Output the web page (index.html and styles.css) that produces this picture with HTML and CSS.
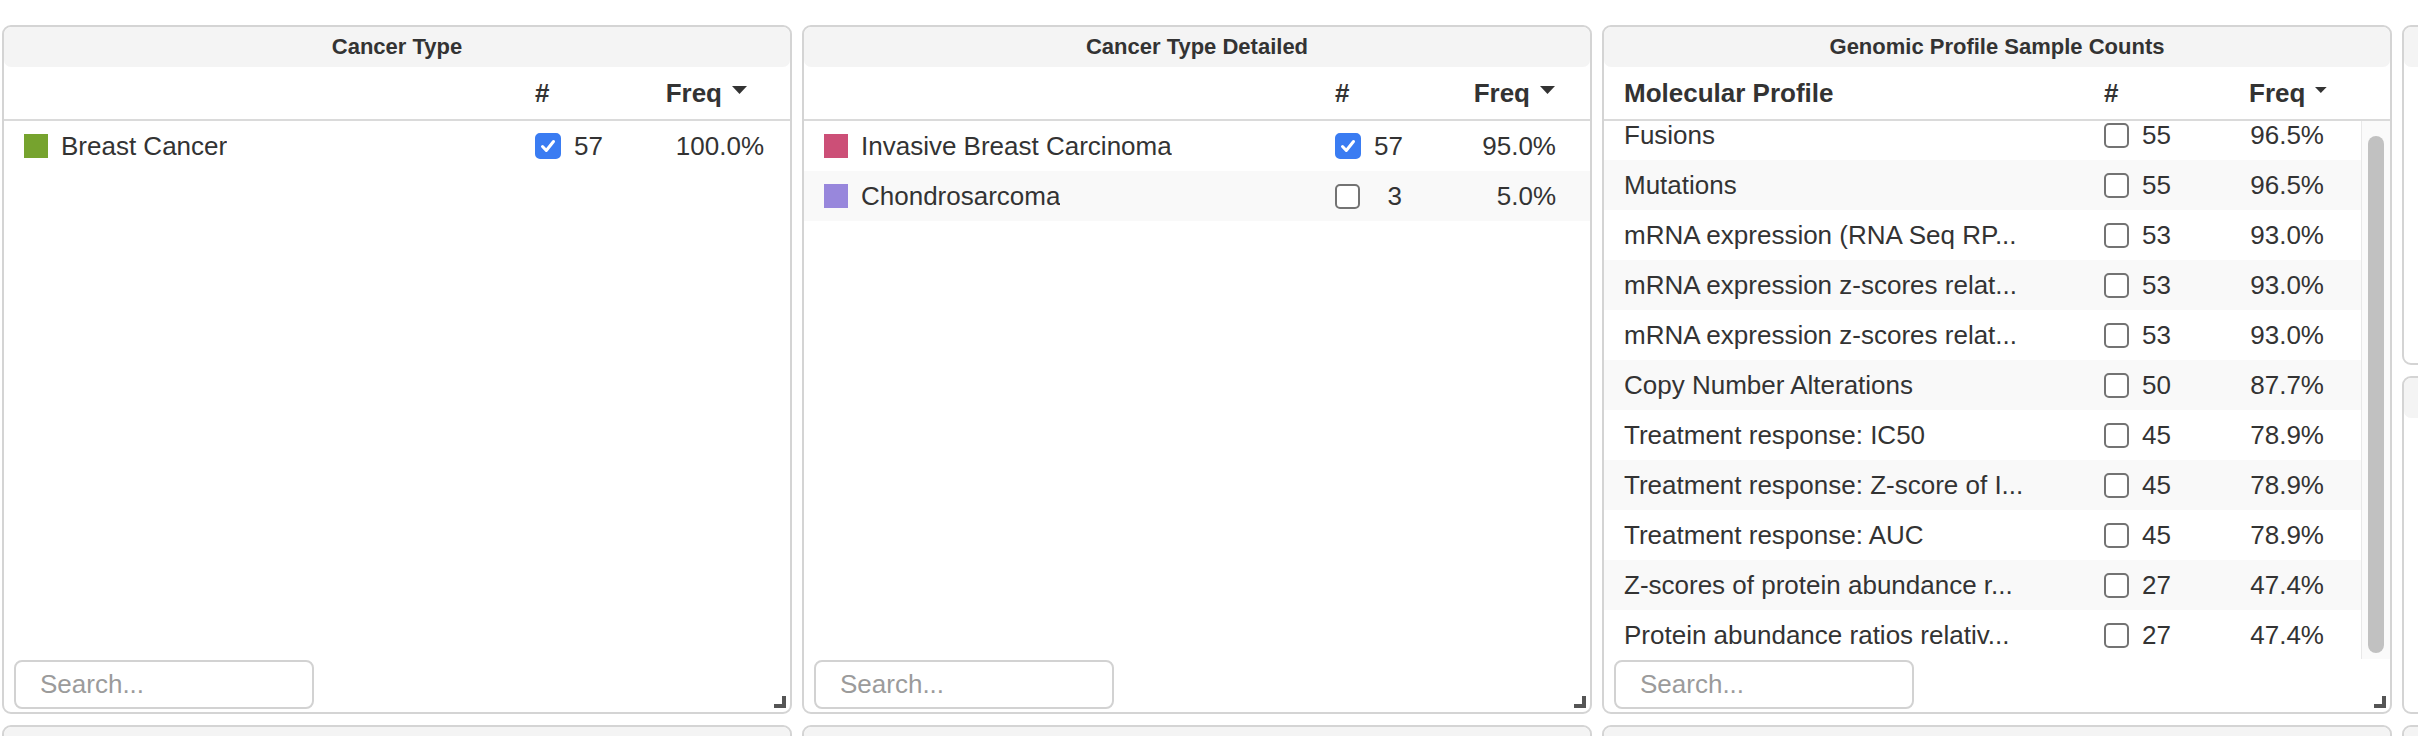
FILE: index.html
```html
<!DOCTYPE html>
<html lang="en">
<head>
<meta charset="utf-8">
<title>Study summary</title>
<link rel="stylesheet" href="styles.css">
</head>
<body>
<div class="grid">

  <section class="card card--tall card--type">
    <div class="card-title">Cancer Type</div>
    <div class="thead">
      <div class="th th-name"></div>
      <div class="th th-count">#</div>
      <div class="th th-freq">Freq <svg class="sort" width="15" height="8" viewBox="0 0 15 8"><path d="M0 0h15L7.5 8z"/></svg></div>
    </div>
    <div class="tbody">
      <div class="list">
        <div class="row">
          <div class="cell-name"><span class="swatch swatch--breast"></span><span class="name">Breast Cancer</span></div>
          <div class="cell-count"><span class="cb cb--on"><svg width="18" height="18" viewBox="0 0 18 18"><path d="M3.5 9.5l3.8 4L14.5 4.5"/></svg></span><span class="num">57</span></div>
          <div class="cell-freq">100.0%</div>
        </div>
      </div>
    </div>
    <div class="card-foot"><input class="search" type="text" placeholder="Search..."></div>
    <svg class="resize" width="12" height="12" viewBox="0 0 12 12"><path d="M8 0h4v12H0V8h8z"/></svg>
  </section>

  <section class="card card--tall card--detailed">
    <div class="card-title">Cancer Type Detailed</div>
    <div class="thead">
      <div class="th th-name"></div>
      <div class="th th-count">#</div>
      <div class="th th-freq">Freq <svg class="sort" width="15" height="8" viewBox="0 0 15 8"><path d="M0 0h15L7.5 8z"/></svg></div>
    </div>
    <div class="tbody">
      <div class="list">
        <div class="row">
          <div class="cell-name"><span class="swatch swatch--ibc"></span><span class="name">Invasive Breast Carcinoma</span></div>
          <div class="cell-count"><span class="cb cb--on"><svg width="18" height="18" viewBox="0 0 18 18"><path d="M3.5 9.5l3.8 4L14.5 4.5"/></svg></span><span class="num">57</span></div>
          <div class="cell-freq">95.0%</div>
        </div>
        <div class="row">
          <div class="cell-name"><span class="swatch swatch--chondro"></span><span class="name">Chondrosarcoma</span></div>
          <div class="cell-count"><span class="cb"></span><span class="num">3</span></div>
          <div class="cell-freq">5.0%</div>
        </div>
      </div>
    </div>
    <div class="card-foot"><input class="search" type="text" placeholder="Search..."></div>
    <svg class="resize" width="12" height="12" viewBox="0 0 12 12"><path d="M8 0h4v12H0V8h8z"/></svg>
  </section>

  <section class="card card--tall card--profile">
    <div class="card-title">Genomic Profile Sample Counts</div>
    <div class="thead">
      <div class="th th-name">Molecular Profile</div>
      <div class="th th-count">#</div>
      <div class="th th-freq">Freq <svg class="sort" width="15" height="8" viewBox="0 0 15 8"><path d="M0 0h15L7.5 8z"/></svg></div>
    </div>
    <div class="tbody">
      <div class="list list--scrolled">
        <div class="row"><div class="cell-name"><span class="name">Fusions</span></div><div class="cell-count"><span class="cb"></span><span class="num">55</span></div><div class="cell-freq">96.5%</div></div>
        <div class="row"><div class="cell-name"><span class="name">Mutations</span></div><div class="cell-count"><span class="cb"></span><span class="num">55</span></div><div class="cell-freq">96.5%</div></div>
        <div class="row"><div class="cell-name"><span class="name">mRNA expression (RNA Seq RP...</span></div><div class="cell-count"><span class="cb"></span><span class="num">53</span></div><div class="cell-freq">93.0%</div></div>
        <div class="row"><div class="cell-name"><span class="name">mRNA expression z-scores relat...</span></div><div class="cell-count"><span class="cb"></span><span class="num">53</span></div><div class="cell-freq">93.0%</div></div>
        <div class="row"><div class="cell-name"><span class="name">mRNA expression z-scores relat...</span></div><div class="cell-count"><span class="cb"></span><span class="num">53</span></div><div class="cell-freq">93.0%</div></div>
        <div class="row"><div class="cell-name"><span class="name">Copy Number Alterations</span></div><div class="cell-count"><span class="cb"></span><span class="num">50</span></div><div class="cell-freq">87.7%</div></div>
        <div class="row"><div class="cell-name"><span class="name">Treatment response: IC50</span></div><div class="cell-count"><span class="cb"></span><span class="num">45</span></div><div class="cell-freq">78.9%</div></div>
        <div class="row"><div class="cell-name"><span class="name">Treatment response: Z-score of I...</span></div><div class="cell-count"><span class="cb"></span><span class="num">45</span></div><div class="cell-freq">78.9%</div></div>
        <div class="row"><div class="cell-name"><span class="name">Treatment response: AUC</span></div><div class="cell-count"><span class="cb"></span><span class="num">45</span></div><div class="cell-freq">78.9%</div></div>
        <div class="row"><div class="cell-name"><span class="name">Z-scores of protein abundance r...</span></div><div class="cell-count"><span class="cb"></span><span class="num">27</span></div><div class="cell-freq">47.4%</div></div>
        <div class="row"><div class="cell-name"><span class="name">Protein abundance ratios relativ...</span></div><div class="cell-count"><span class="cb"></span><span class="num">27</span></div><div class="cell-freq">47.4%</div></div>
      </div>
      <div class="scrolltrack"><div class="thumb"></div></div>
    </div>
    <div class="card-foot"><input class="search" type="text" placeholder="Search..."></div>
    <svg class="resize" width="12" height="12" viewBox="0 0 12 12"><path d="M8 0h4v12H0V8h8z"/></svg>
  </section>

  <section class="card card--half card--col4a"><div class="card-title"></div></section>
  <section class="card card--half card--col4b"><div class="card-title"></div></section>

  <section class="card card--next"><div class="card-title"></div></section>
  <section class="card card--next"><div class="card-title"></div></section>
  <section class="card card--next"><div class="card-title"></div></section>
  <section class="card card--next"><div class="card-title"></div></section>

</div>
</body>
</html>
```

FILE: styles.css
```css
* {
  box-sizing: border-box;
}

html,
body {
  margin: 0;
  height: 100%;
  overflow: hidden;
  background: #ffffff;
}

body {
  font-family: "Liberation Sans", Arial, Helvetica, sans-serif;
  font-size: 26px;
  color: #333333;
}

.grid {
  display: grid;
  grid-template-columns: repeat(4, 790px);
  grid-template-rows: 340px 338px 300px;
  column-gap: 10px;
  row-gap: 11px;
  padding: 25px 0 0 2px;
  width: max-content;
}

.card {
  position: relative;
  display: flex;
  flex-direction: column;
  border: 2px solid #d4d4d4;
  border-radius: 9px;
  background: #ffffff;
  overflow: hidden;
}

.card--tall {
  grid-row: span 2;
}

.card--col4a {
  grid-column: 4;
  grid-row: 1;
}

.card--col4b {
  grid-column: 4;
  grid-row: 2;
}

.card--next {
  grid-row: 3;
}

.card-title {
  flex: 0 0 40px;
  display: flex;
  align-items: center;
  justify-content: center;
  background: #f4f4f4;
  border-radius: 7px;
  font-size: 22px;
  font-weight: bold;
  color: #333333;
}

/* column settings per card */
.card--type,
.card--detailed {
  --cw: 110px;
  --fw: 145px;
  --fp: 26px;
  --hp: 43px;
  --tp: 0px;
}

.card--detailed {
  --fp: 34px;
  --hp: 35px;
}

.card--profile {
  --cw: 145px;
  --fw: 112px;
  --fp: 37px;
  --hp: 34px;
  --tp: 29px;
}

.thead {
  flex: 0 0 54px;
  display: grid;
  grid-template-columns: 1fr var(--cw) var(--fw);
  align-items: center;
  padding-right: var(--tp);
  border-bottom: 2px solid #dadada;
  font-weight: bold;
}

.th-name {
  padding-left: 20px;
  white-space: nowrap;
}

.th-freq {
  display: flex;
  align-items: center;
  justify-content: flex-end;
  gap: 10px;
  padding-right: var(--hp);
}

.sort {
  fill: #333333;
  margin-bottom: 6px;
}

.tbody {
  flex: 1 1 auto;
  min-height: 0;
  display: flex;
  overflow: hidden;
}

.list {
  flex: 1 1 auto;
  min-width: 0;
}

.list--scrolled {
  margin-top: -11px;
}

.row {
  display: grid;
  grid-template-columns: 1fr var(--cw) var(--fw);
  align-items: center;
  height: 50px;
}

.row:nth-child(even) {
  background: #f9f9f9;
}

.cell-name {
  display: flex;
  align-items: center;
  gap: 13px;
  padding-left: 20px;
  min-width: 0;
}

.name {
  white-space: nowrap;
  overflow: hidden;
  text-overflow: ellipsis;
}

.swatch {
  flex: 0 0 24px;
  width: 24px;
  height: 24px;
}

.swatch--breast {
  background: #76a32e;
}

.swatch--ibc {
  background: #cc4f77;
}

.swatch--chondro {
  background: #9887dc;
}

.cell-count {
  display: flex;
  align-items: center;
}

.cb {
  flex: 0 0 25px;
  width: 25px;
  height: 25px;
  border: 2px solid #737373;
  border-radius: 5px;
  background: #ffffff;
  display: flex;
  align-items: center;
  justify-content: center;
}

.cb--on {
  flex-basis: 26px;
  width: 26px;
  height: 26px;
  border-color: #3a7cf2;
  background: #3a7cf2;
}

.cb svg path {
  fill: none;
  stroke: #ffffff;
  stroke-width: 3;
  stroke-linecap: round;
  stroke-linejoin: round;
}

.num {
  width: 30px;
  margin-left: 12px;
  text-align: right;
}

.cell-freq {
  text-align: right;
  padding-right: var(--fp);
}

.scrolltrack {
  flex: 0 0 29px;
  border-left: 1px solid #e8e8e8;
  background: #fafafa;
  padding: 15px 0 0 6px;
}

.thumb {
  width: 16px;
  height: 517px;
  border-radius: 8px;
  background: #c1c1c1;
}

.card-foot {
  flex: 0 0 53px;
  padding: 1px 0 0 10px;
}

.search {
  display: block;
  width: 300px;
  height: 49px;
  margin: 0;
  border: 2px solid #d2d2d2;
  border-radius: 8px;
  padding: 0 0 0 24px;
  font-family: "Liberation Sans", Arial, Helvetica, sans-serif;
  font-size: 26px;
  color: #333333;
  background: #ffffff;
  outline: none;
}

.search::placeholder {
  color: #9b9b9b;
}

.resize {
  position: absolute;
  right: 4px;
  bottom: 4px;
  fill: #555555;
}
```
